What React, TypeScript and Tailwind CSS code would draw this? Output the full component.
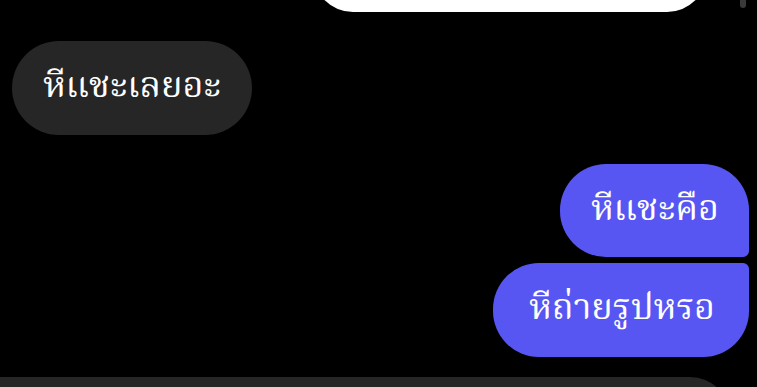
export default function App() {
  return (
    <div className="w-[757px] h-[387px] bg-black overflow-hidden flex flex-col font-['Noto_Serif_Thai',_'Noto_Sans_Thai',_sans-serif]">
      {/* top: tail of previous message + scrollbar */}
      <div className="h-[12px] flex shrink-0">
        <div className="ml-[313px] w-[394px] h-[12px] overflow-hidden">
          <div className="w-full h-[80px] -mt-[68px] bg-white rounded-[40px]" />
        </div>
        <div className="ml-[33px] w-[6px] h-[12px] -mt-[4px] rounded-full bg-[#3a3a3a]" />
      </div>

      {/* received */}
      <div className="mt-[29px] pl-[12px] flex">
        <div className="h-[94px] pl-[31px] pr-[31px] flex items-center rounded-full bg-[#262626] text-white text-[36px]">
          หีแชะเลยอะ
        </div>
      </div>

      {/* sent */}
      <div className="mt-[29px] pr-[8px] flex flex-col items-end gap-[6px]">
        <div className="h-[93px] pl-[31px] pr-[30px] flex items-center rounded-tl-[46px] rounded-bl-[46px] rounded-tr-[46px] rounded-br-[6px] bg-[#5856f2] text-white text-[36px]">
          หีแชะคือ
        </div>
        <div className="h-[94px] pl-[36px] pr-[34px] flex items-center rounded-tl-[46px] rounded-bl-[46px] rounded-br-[46px] rounded-tr-[6px] bg-[#5856f2] text-white text-[36px]">
          หีถ่ายรูปหรอ
        </div>
      </div>

      {/* composer */}
      <div className="mt-[20px] mr-[27px] h-[60px] shrink-0 bg-[#262626] rounded-tr-[40px]" />
    </div>
  );
}
